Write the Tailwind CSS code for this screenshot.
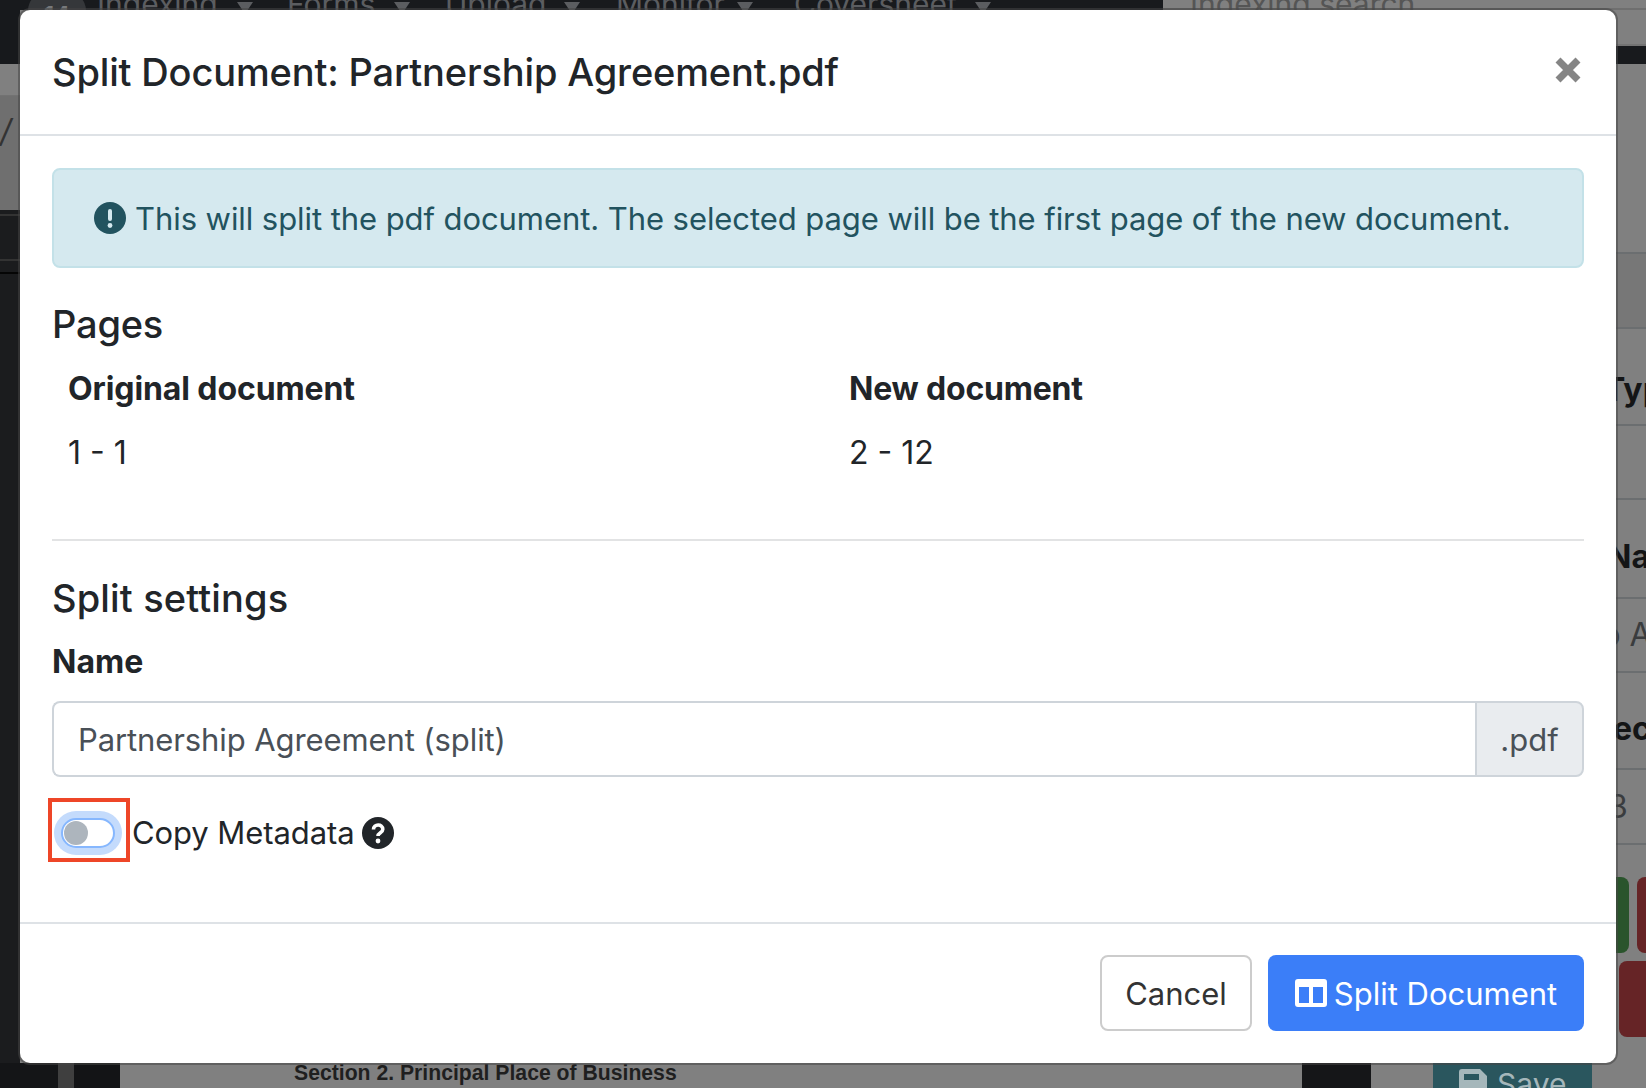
<!DOCTYPE html>
<html lang="en">
<head>
    <meta charset="UTF-8">
    <title>Split Document</title>
    <script src="https://cdn.jsdelivr.net/npm/@tailwindcss/browser@4"></script>
</head>
<body class="m-0">
    <div class="w-[1646px] h-[1088px] overflow-hidden bg-[#808080] grid grid-cols-[20px_1596px_30px] grid-rows-[10px_1053px_25px] font-['Inter',sans-serif] text-[#212529]">

        <!-- navbar behind the dialog, cut off by the window -->
        <div class="col-span-3 flex overflow-hidden bg-[#181a1d] text-[#5b5d60] text-[30px] leading-[10px] whitespace-nowrap">
            <div class="w-[1163px] flex items-start shrink-0 -mt-[1px]">
                <span class="ml-[28px] w-[58px] h-[40px] -mt-[8px] rounded-full bg-[#35373a] flex items-center justify-center text-[24px] font-bold text-[#77797b] pt-[10px]">14</span>
                <span class="ml-[11px] w-[140px]">Indexing</span>
                <span class="w-[50px] pt-[3px]"><span class="block w-0 h-0 border-x-[8px] border-x-transparent border-t-[12px] border-t-[#5b5d60]"></span></span>
                <span class="w-[107px]">Forms</span>
                <span class="w-[51px] pt-[3px]"><span class="block w-0 h-0 border-x-[8px] border-x-transparent border-t-[12px] border-t-[#5b5d60]"></span></span>
                <span class="w-[119px]">Upload</span>
                <span class="w-[52px] pt-[3px]"><span class="block w-0 h-0 border-x-[8px] border-x-transparent border-t-[12px] border-t-[#5b5d60]"></span></span>
                <span class="w-[121px]">Monitor</span>
                <span class="w-[57px] pt-[3px]"><span class="block w-0 h-0 border-x-[8px] border-x-transparent border-t-[12px] border-t-[#5b5d60]"></span></span>
                <span class="w-[181px]">Coversheet</span>
                <span class="pt-[3px]"><span class="block w-0 h-0 border-x-[8px] border-x-transparent border-t-[12px] border-t-[#5b5d60]"></span></span>
            </div>
            <div class="flex-1 bg-[#808080] pl-[27px] text-[#555] border-b-2 border-[#6f6f6f]"><span class="block -mt-[1px]">Indexing search</span></div>
        </div>

        <!-- left strip -->
        <div class="flex flex-col overflow-hidden bg-[#1b1c1e]">
            <div class="h-[54px] bg-[#17191c]"></div>
            <div class="h-[32px] bg-[#808080] border-b border-[#727272]"></div>
            <div class="h-[114px] bg-[#6f6f6f] text-[#333] text-[32px] leading-[70px] italic">/</div>
            <div class="h-[6px] border-b-2 border-[#333]"></div>
            <div class="h-[45px] border-b-2 border-[#333]"></div>
            <div class="h-[13px] border-b-2 border-[#050505]"></div>
        </div>

        <!-- dialog -->
        <div class="bg-white rounded-[10px] flex flex-col overflow-hidden shadow-[0_0_0_2px_rgba(70,70,70,0.55)] relative">
            <div class="h-[126px] shrink-0 border-b-2 border-[#dee2e6] flex items-start justify-between pl-[32px] pr-[35px]">
                <h5 class="text-[38px] leading-[48px] font-medium mt-[38px] tracking-[-0.15px]">Split Document: Partnership Agreement.pdf</h5>
                <svg class="mt-[47px]" width="26" height="26" viewBox="0 0 26 26"><path d="M3 3 L23 23 M23 3 L3 23" stroke="#858585" stroke-width="7"/></svg>
            </div>

            <div class="flex-1 flex flex-col px-[32px] pt-[32px]">
                <div class="h-[100px] shrink-0 bg-[#d5e9ef] border-2 border-[#c3e1e8] rounded-[8px] flex items-center pl-[40px] text-[#22535f] text-[31px] tracking-[-0.07px] whitespace-nowrap">
                    <svg class="mr-[9px] shrink-0" width="32" height="32" viewBox="0 0 32 32"><circle cx="16" cy="16" r="16" fill="#22535f"/><rect x="14" y="7" width="4" height="12" rx="2" fill="#d5e9ef"/><circle cx="16" cy="23.5" r="2.4" fill="#d5e9ef"/></svg>
                    <span class="pt-[2px]">This will split the pdf document. The selected page will be the first page of the new document.</span>
                </div>

                <h5 class="text-[38px] leading-[48px] font-medium mt-[32px] tracking-[-0.2px]">Pages</h5>
                <div class="grid grid-cols-[781px_1fr] px-[16px] mt-[9px] text-[32px] leading-[63px]">
                    <div class="font-bold tracking-[-0.1px]">Original document</div>
                    <div class="font-bold tracking-[-0.2px]">New document</div>
                    <div class="pt-[1px]">1 - 1</div>
                    <div class="pt-[1px]">2 - 12</div>
                </div>
                <div class="h-[2px] bg-[#e2e3e4] mt-[55px] shrink-0"></div>

                <h5 class="text-[38px] leading-[48px] font-medium mt-[33px] tracking-[0.15px]">Split settings</h5>
                <label class="block text-[32px] leading-[48px] font-bold mt-[16px]">Name</label>
                <div class="flex h-[76px] mt-[15px] shrink-0 text-[31px] text-[#495057]">
                    <div class="flex-1 border-2 border-r-0 border-[#ced4da] rounded-l-[8px] flex items-center pl-[24px] pt-[2px] tracking-[-0.1px]">Partnership Agreement (split)</div>
                    <div class="w-[109px] bg-[#e9ecef] border-2 border-[#ced4da] rounded-r-[8px] flex items-center justify-center pt-[2px]">.pdf</div>
                </div>

                <div class="flex items-center mt-[21px] -ml-[4px] text-[31px] tracking-[-0.08px]">
                    <div class="w-[82px] h-[64px] border-[4px] border-[#ee4628] flex items-center justify-center pt-[6px] pr-[2px]">
                        <div class="w-[54px] h-[30px] rounded-full bg-white border-2 border-[#86b7fe] shadow-[0_0_0_7px_#c4dbfc] flex items-center pl-[1px]">
                            <div class="w-[24px] h-[24px] rounded-full bg-[#adb5bd]"></div>
                        </div>
                    </div>
                    <span class="ml-[2px] pt-[6px]">Copy Metadata</span>
                    <svg class="ml-[7px] mt-[6px]" width="32" height="32" viewBox="0 0 32 32"><circle cx="16" cy="16" r="16" fill="#212529"/><path d="M11.5 12.5 C11.5 6.5 20.8 6.5 20.8 12.3 C20.8 15.8 16 15.6 16 19" fill="none" stroke="#fff" stroke-width="3.6"/><circle cx="16" cy="24" r="2.4" fill="#fff"/></svg>
                </div>
            </div>

            <div class="h-[141px] shrink-0 border-t-2 border-[#dee2e6] flex items-start justify-end gap-[16px] pt-[31px] pr-[32px] text-[31px]">
                <button class="h-[76px] w-[152px] border-2 border-[#cccccc] rounded-[8px] text-[#333] bg-white pt-[2px]">Cancel</button>
                <button class="h-[76px] w-[316px] rounded-[8px] bg-[#3b7ef8] text-white flex items-center justify-center">
                    <svg class="mr-[7px]" width="32" height="28" viewBox="0 0 32 28"><path fill="#fff" fill-rule="evenodd" d="M3 0 H29 A3 3 0 0 1 32 3 V25 A3 3 0 0 1 29 28 H3 A3 3 0 0 1 0 25 V3 A3 3 0 0 1 3 0 Z M4 8 V24 H14 V8 Z M18 8 V24 H28 V8 Z"/></svg>
                    <span class="pt-[2px]">Split Document</span>
                </button>
            </div>
        </div>

        <!-- right strip: sidebar table and buttons behind the dialog -->
        <div class="flex flex-col overflow-hidden text-[32px] text-[#141516] whitespace-nowrap">
            <div class="h-[36px] border-b-2 border-[#737373] shrink-0"></div>
            <div class="h-[18px] bg-[#181a1d] shrink-0"></div>
            <div class="h-[188px] shrink-0"></div>
            <div class="h-[77px] bg-[#777777] border-y-2 border-[#6b6e70] shrink-0"></div>
            <div class="h-[97px] border-b-2 border-[#6b6e70] shrink-0 font-bold flex items-center -ml-[12px] pt-[26px]">Type</div>
            <div class="h-[74px] border-b-2 border-[#6b6e70] shrink-0"></div>
            <div class="h-[99px] border-b-2 border-[#6b6e70] shrink-0 font-bold flex items-center -ml-[9px] pt-[16px]">Name</div>
            <div class="h-[74px] border-b-2 border-[#6b6e70] shrink-0 flex items-center text-[#3a3c3e] -ml-[15px]">p A</div>
            <div class="h-[97px] border-b-2 border-[#6b6e70] shrink-0 font-bold flex items-center pt-[16px] -ml-[3px]">ect</div>
            <div class="h-[75px] border-b-2 border-[#6b6e70] shrink-0 flex items-center text-[#3a3c3e] -ml-[8px]">3</div>
            <div class="h-[32px] shrink-0"></div>
            <div class="flex gap-[8px] shrink-0">
                <div class="w-[13px] h-[76px] shrink-0 bg-[#2a542c] rounded-r-[8px]"></div>
                <div class="w-[20px] h-[76px] shrink-0 bg-[#662426] rounded-l-[8px]"></div>
            </div>
            <div class="w-[27px] h-[76px] ml-[3px] mt-[8px] bg-[#662426] rounded-l-[8px] shrink-0"></div>
        </div>

        <!-- bottom: document viewer and save button -->
        <div class="col-span-3 flex bg-[#808080] overflow-hidden whitespace-nowrap">
            <div class="w-[58px] bg-[#141517] shrink-0"></div>
            <div class="w-[16px] bg-[#3f3f3f] shrink-0"></div>
            <div class="w-[46px] bg-[#131416] shrink-0"></div>
            <div class="w-[1182px] shrink-0 pl-[174px] font-['Liberation_Sans',sans-serif] font-bold text-[#1f1f1f] text-[21.2px] leading-[20px]">Section 2. Principal Place of Business</div>
            <div class="w-[69px] bg-[#151618] shrink-0"></div>
            <div class="w-[62px] shrink-0"></div>
            <div class="w-[159px] bg-[#2a565e] shrink-0 flex items-start pl-[26px] pt-[1px] text-[#a5b7bb] text-[30px] leading-[40px]">
                <svg class="mt-[5px] mr-[10px]" width="28" height="28" viewBox="0 0 28 28"><path fill="#a5b7bb" fill-rule="evenodd" d="M3 0 H21 L28 7 V25 A3 3 0 0 1 25 28 H3 A3 3 0 0 1 0 25 V3 A3 3 0 0 1 3 0 Z M5 5 V11 H20 V5 Z"/></svg>
                Save
            </div>
        </div>
    </div>
</body>
</html>
